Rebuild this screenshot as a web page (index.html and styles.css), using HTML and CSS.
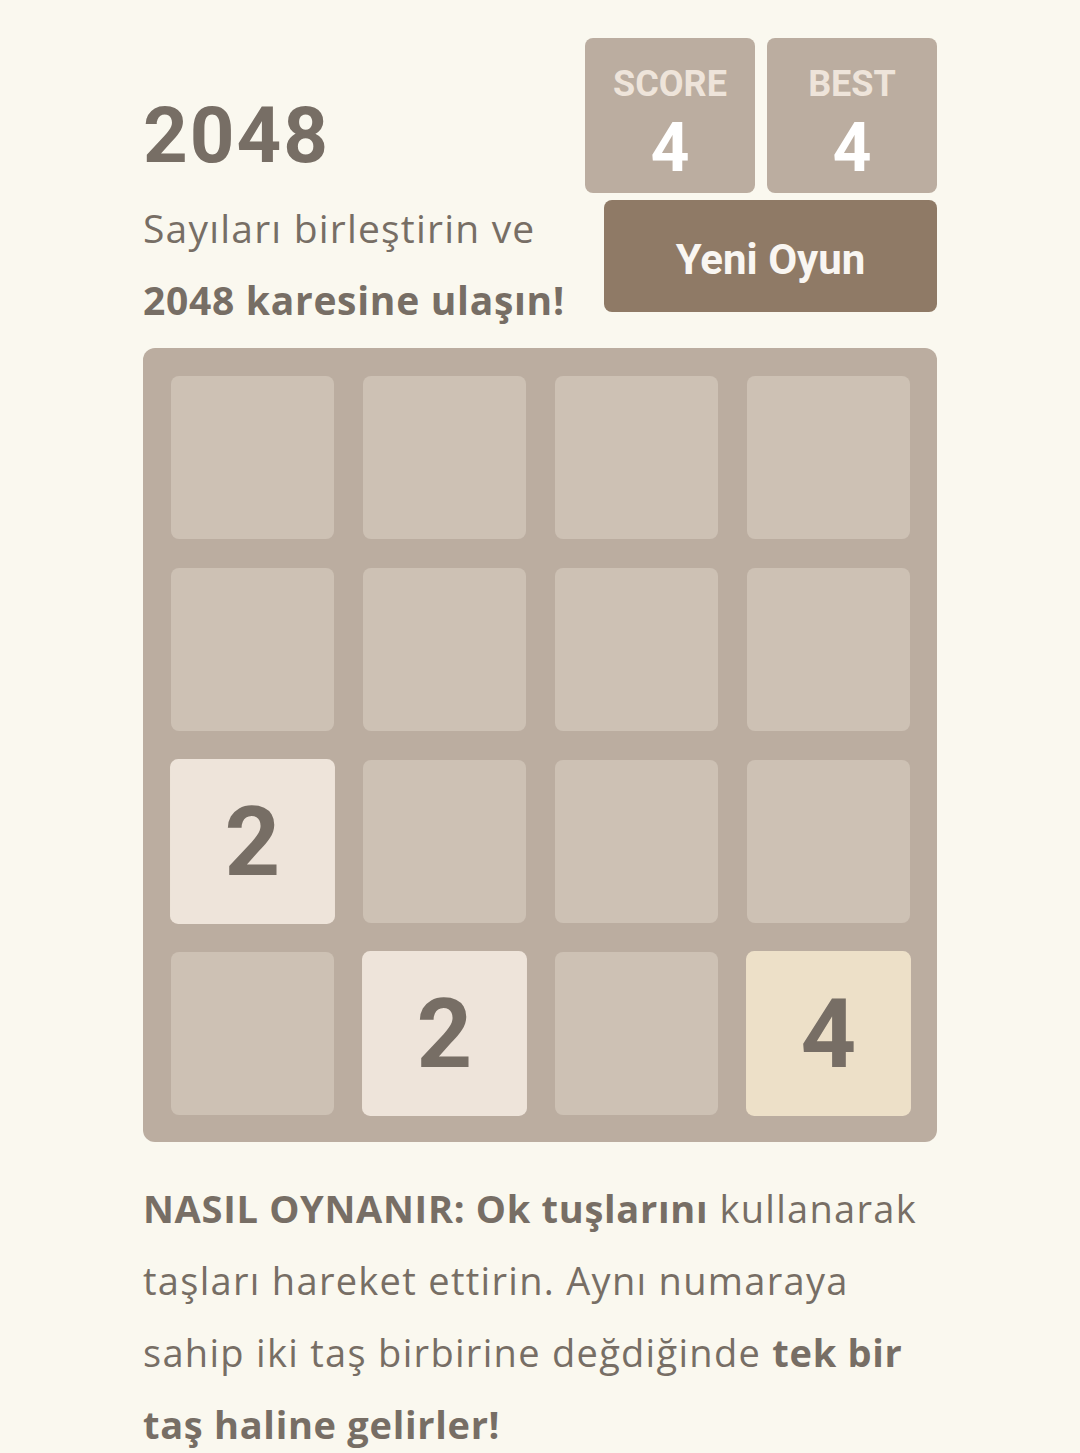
FILE: index.html
```html
<!DOCTYPE html>
<html lang="tr">
<head>
<meta charset="utf-8">
<title>2048</title>
<link rel="stylesheet" href="styles.css">
</head>
<body>
<div class="container">
  <div class="top">
    <div class="intro">
      <h1 class="title">2048</h1>
      <p class="subtitle">Sayıları birleştirin ve <strong>2048 karesine ulaşın!</strong></p>
    </div>
    <div class="controls">
      <div class="scores">
        <div class="score-box"><div class="score-label">SCORE</div><div class="score-value">4</div></div>
        <div class="score-box"><div class="score-label">BEST</div><div class="score-value">4</div></div>
      </div>
      <a class="new-game">Yeni Oyun</a>
    </div>
  </div>
  <div class="board">
    <div class="cell"></div><div class="cell"></div><div class="cell"></div><div class="cell"></div>
    <div class="cell"></div><div class="cell"></div><div class="cell"></div><div class="cell"></div>
    <div class="cell tile tile-2">2</div><div class="cell"></div><div class="cell"></div><div class="cell"></div>
    <div class="cell"></div><div class="cell tile tile-2">2</div><div class="cell"></div><div class="cell tile tile-4">4</div>
  </div>
  <p class="explanation"><strong>NASIL OYNANIR: Ok tuşlarını</strong> kullanarak taşları hareket ettirin. Aynı numaraya sahip iki taş birbirine değdiğinde <strong>tek bir taş haline gelirler!</strong></p>
</div>
</body>
</html>
```
FILE: styles.css
```css
html, body {
  margin: 0;
  padding: 0;
  background: #faf8ef;
}
body {
  font-family: "Open Sans", "Liberation Sans", sans-serif;
  color: #776e65;
}
.container {
  width: 794px;
  margin: 0 auto;
  padding-top: 38px;
}
.top {
  display: flex;
  justify-content: space-between;
}
.intro {
  display: flex;
  flex-direction: column;
}
.title {
  margin: 58px 0 0 0;
  font-family: Roboto, "Open Sans", sans-serif;
  font-size: 78px;
  line-height: 80px;
  height: 80px;
  font-weight: 700;
  letter-spacing: 2px;
}
.subtitle {
  margin: 16px 0 0 0;
  font-size: 39px;
  line-height: 72px;
  letter-spacing: 1.2px;
  width: 436px;
}
.subtitle strong {
  font-weight: 700;
  letter-spacing: 0.7px;
}
.controls {
  width: 352px;
  display: flex;
  flex-direction: column;
  align-items: flex-end;
  font-family: Roboto, "Open Sans", sans-serif;
}
.scores {
  display: flex;
  gap: 12px;
}
.score-box {
  width: 170px;
  height: 155px;
  background: #bbada0;
  border-radius: 8px;
  text-align: center;
  box-sizing: border-box;
  padding-top: 26px;
}
.score-label {
  font-size: 36px;
  line-height: 40px;
  font-weight: 700;
  color: #eee4da;
}
.score-value {
  margin-top: 10px;
  font-size: 68px;
  line-height: 68px;
  font-weight: 700;
  color: #ffffff;
}
.new-game {
  display: block;
  margin-top: 7px;
  width: 333px;
  height: 112px;
  line-height: 120px;
  overflow: hidden;
  background: #8f7a66;
  border-radius: 8px;
  color: #f9f6f2;
  font-size: 42px;
  font-weight: 700;
  text-align: center;
}
.board {
  margin-top: 12px;
  background: #bbada0;
  border-radius: 12px;
  padding: 28px;
  display: grid;
  grid-template-columns: repeat(4, 163px);
  grid-template-rows: repeat(4, 163px);
  gap: 29px;
  box-sizing: border-box;
  width: 794px;
  height: 794px;
}
.cell {
  background: #cdc1b4;
  border-radius: 8px;
}
.tile {
  display: flex;
  align-items: center;
  justify-content: center;
  font-family: Roboto, "Open Sans", sans-serif;
  font-size: 96px;
  font-weight: 700;
  color: #776e65;
  transform: scale(1.012);
}
.tile-2 { background: #eee4da; }
.tile-4 { background: #ede0c8; }
.explanation {
  margin: 30px 0 0 0;
  font-size: 38px;
  line-height: 72px;
  letter-spacing: 1.3px;
}
.explanation strong {
  font-weight: 700;
  letter-spacing: 0.7px;
}
```
